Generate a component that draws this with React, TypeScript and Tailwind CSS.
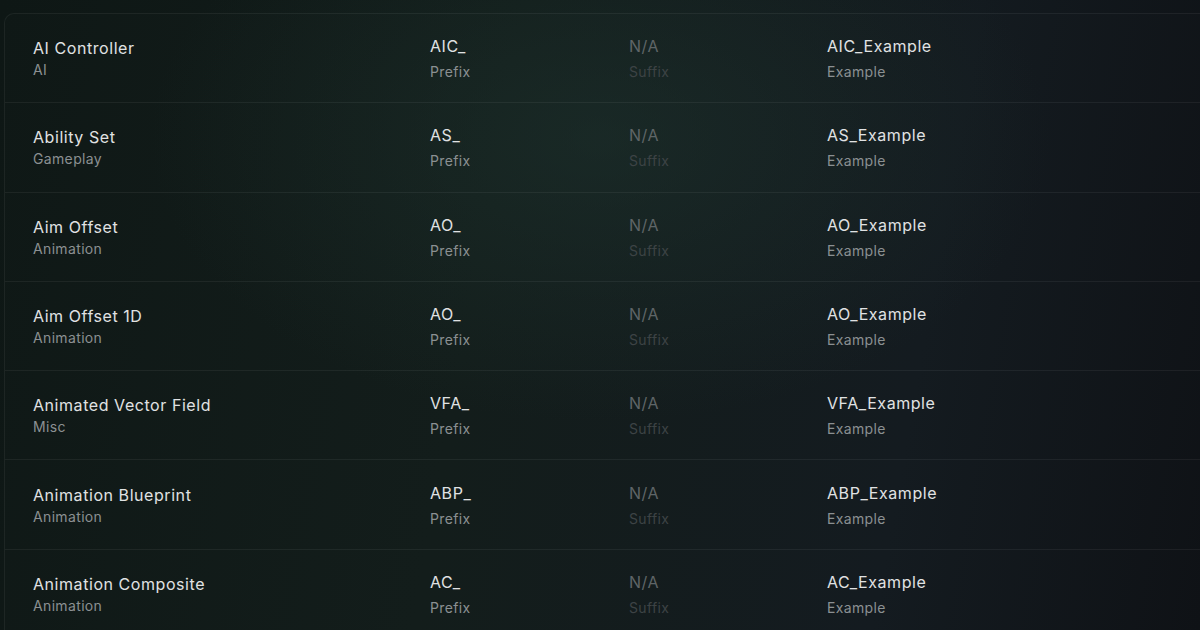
import React from "react";

const rows = [
  { name: "AI Controller", cat: "AI", prefix: "AIC_" },
  { name: "Ability Set", cat: "Gameplay", prefix: "AS_" },
  { name: "Aim Offset", cat: "Animation", prefix: "AO_" },
  { name: "Aim Offset 1D", cat: "Animation", prefix: "AO_" },
  { name: "Animated Vector Field", cat: "Misc", prefix: "VFA_" },
  { name: "Animation Blueprint", cat: "Animation", prefix: "ABP_" },
  { name: "Animation Composite", cat: "Animation", prefix: "AC_" },
];

export default function App() {
  return (
    <div
      className="w-[1200px] h-[630px] overflow-hidden bg-[#0d1211] bg-[image:radial-gradient(ellipse_50%_60%_at_50%_22%,rgba(30,52,47,0.5),transparent_75%),linear-gradient(100deg,#0e1715_0%,#121c1a_40%,#131a1f_75%,#0e1115_100%)]"
      style={{ fontFamily: "Inter, 'Noto Sans', sans-serif" }}
    >
      <div className="pl-1 pt-[13px]">
        <div className="w-[1260px] rounded-[10px] border border-white/[0.06] bg-white/[0.008]">
          {rows.map((r) => (
            <div
              key={r.name}
              className="h-[89.3px] border-b border-white/[0.06] grid grid-cols-[397px_199px_198px_1fr] items-center pl-[28px]"
            >
              <div className="flex flex-col">
                <span className="text-base leading-6 tracking-[0.035em] text-[#e0e2e3]">{r.name}</span>
                <span className="text-sm leading-5 tracking-[0.025em] text-[#8b9092]">{r.cat}</span>
              </div>
              <div className="flex flex-col gap-1">
                <span className="text-base leading-6 tracking-[0.035em] text-[#e0e2e3]">{r.prefix}</span>
                <span className="text-sm leading-5 tracking-[0.025em] text-[#8b9092]">Prefix</span>
              </div>
              <div className="flex flex-col gap-1">
                <span className="text-base leading-6 tracking-[0.035em] text-[#5f6567]">N/A</span>
                <span className="text-sm leading-5 tracking-[0.025em] text-[#3d4345]">Suffix</span>
              </div>
              <div className="flex flex-col gap-1">
                <span className="text-base leading-6 tracking-[0.035em] text-[#e0e2e3]">{r.prefix}Example</span>
                <span className="text-sm leading-5 tracking-[0.025em] text-[#8b9092]">Example</span>
              </div>
            </div>
          ))}
        </div>
      </div>
    </div>
  );
}
